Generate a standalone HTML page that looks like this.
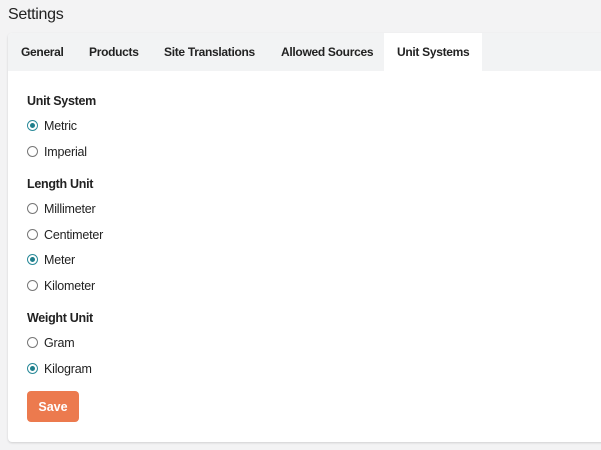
<!DOCTYPE html>
<html><head><style>
body{margin:0;width:601px;height:450px;background:#f3f3f4;font-family:"Liberation Sans",sans-serif;color:#222;position:relative;overflow:hidden}
.a{position:absolute;white-space:nowrap}
.t{font-size:16px;left:8px;top:6px;color:#222;letter-spacing:-0.3px}
.card{left:8px;top:33px;width:610px;height:409px;background:#fff;border-radius:4px;box-shadow:0 1px 2px rgba(0,0,0,.15)}
.bar{left:8px;top:33px;width:610px;height:38px;background:#f2f3f4;border-radius:4px 4px 0 0}
.act{left:384px;top:33px;width:98px;height:38px;background:#fff}
.tab{font-size:12px;font-weight:bold;top:45px;color:#222;letter-spacing:-0.3px}
.h{font-size:12.5px;font-weight:bold;left:27px;letter-spacing:-0.3px}
.l{font-size:12.5px;left:44px;letter-spacing:-0.2px}
.r{left:27px;width:9px;height:9px;border:1px solid #777;border-radius:50%;background:#fff}
.r.on{border-color:#2a8a99}
.r.on::after{content:"";position:absolute;left:2px;top:2px;width:5px;height:5px;border-radius:50%;background:#1f7f8c}
.btn{left:27px;top:391px;width:52px;height:31px;background:#ec7a4e;border-radius:4px;color:#fff;font-weight:bold;font-size:12.5px;text-align:center;line-height:32px}
</style></head><body>
<div class="a t">Settings</div>
<div class="a card"></div>
<div class="a bar"></div>
<div class="a act"></div>
<div class="a tab" style="left:21px">General</div>
<div class="a tab" style="left:89px">Products</div>
<div class="a tab" style="left:164px">Site Translations</div>
<div class="a tab" style="left:281px">Allowed Sources</div>
<div class="a tab" style="left:397px">Unit Systems</div>

<div class="a h" style="top:94px">Unit System</div>
<div class="a r on" style="top:120px"></div><div class="a l" style="top:119px">Metric</div>
<div class="a r" style="top:146px"></div><div class="a l" style="top:145px">Imperial</div>

<div class="a h" style="top:177px">Length Unit</div>
<div class="a r" style="top:203px"></div><div class="a l" style="top:202px">Millimeter</div>
<div class="a r" style="top:229px"></div><div class="a l" style="top:228px">Centimeter</div>
<div class="a r on" style="top:254px"></div><div class="a l" style="top:253px">Meter</div>
<div class="a r" style="top:280px"></div><div class="a l" style="top:279px">Kilometer</div>

<div class="a h" style="top:311px">Weight Unit</div>
<div class="a r" style="top:337px"></div><div class="a l" style="top:336px">Gram</div>
<div class="a r on" style="top:363px"></div><div class="a l" style="top:362px">Kilogram</div>

<div class="a btn">Save</div>
</body></html>
